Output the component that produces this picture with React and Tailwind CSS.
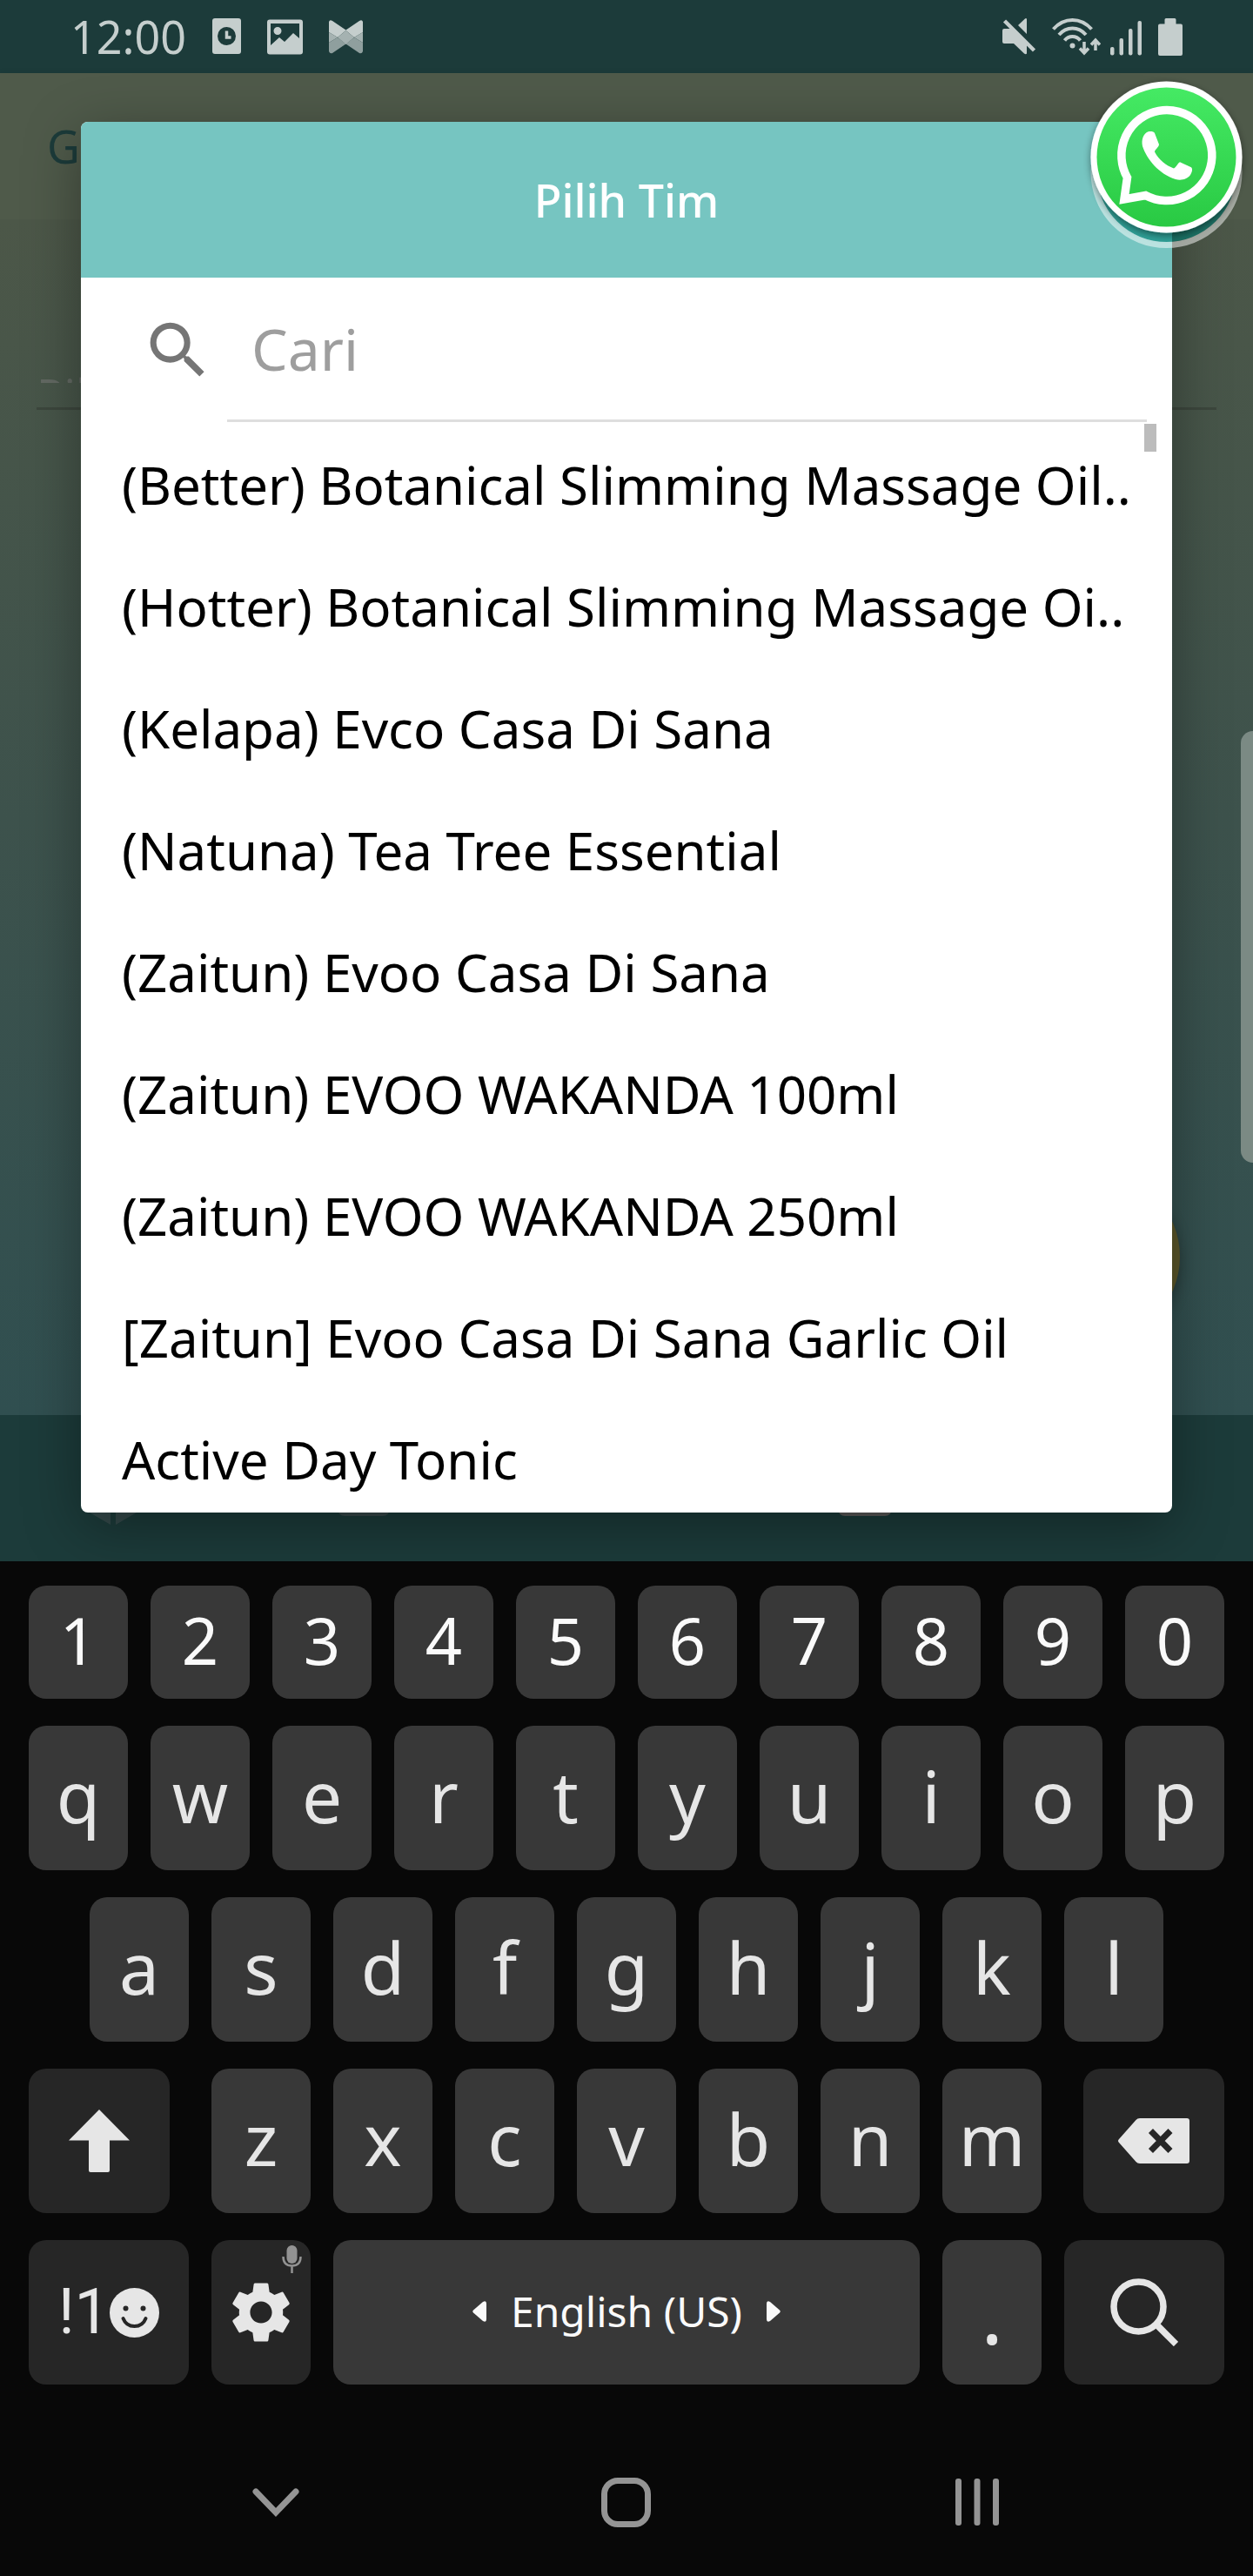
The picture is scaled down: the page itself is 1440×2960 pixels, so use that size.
const TEAMS = [
  "(Better) Botanical Slimming Massage Oil..",
  "(Hotter) Botanical Slimming Massage Oi..",
  "(Kelapa) Evco Casa Di Sana",
  "(Natuna) Tea Tree Essential",
  "(Zaitun) Evoo Casa Di Sana",
  "(Zaitun) EVOO WAKANDA 100ml",
  "(Zaitun) EVOO WAKANDA 250ml",
  "[Zaitun] Evoo Casa Di Sana Garlic Oil",
  "Active Day Tonic",
];

function StatusBar() {
  return (
    <header className="flex h-[84px] items-center justify-between bg-[#1c3b3a] px-[81px] text-[#c5cecd]">
      <div className="flex items-center gap-[30px]">
        <span className="text-[52px] leading-none">12:00</span>
        <svg width="33" height="42" viewBox="0 0 33 42" aria-hidden="true">
          <rect width="33" height="41" y="0" rx="3" fill="currentColor" />
          <circle cx="16.500" cy="20.500" r="10.500" fill="#1c3b3a" />
          <path d="M16.500 14.500v7.500h5" fill="none" stroke="currentColor" strokeWidth="3.500" />
        </svg>
        <svg width="41" height="41" viewBox="0 0 41 41" aria-hidden="true">
          <path
            fillRule="evenodd"
            fill="currentColor"
            d="M3 0.500h35a3 3 0 0 1 3 3v34a3 3 0 0 1-3 3H3a3 3 0 0 1-3-3v-34a3 3 0 0 1 3-3zM4 5v25l10-9 6 5 10-10 7 6V5zM12 9a4.500 4.500 0 1 1 0 9 4.500 4.500 0 0 1 0-9z"
          />
        </svg>
        <svg width="39" height="39" viewBox="0 0 39 39" aria-hidden="true">
          <path d="M0 2Q1-1 4 1L19.500 11.500 35 1Q38-1 39 2V14L29 20 19.500 12 10 20 0 14Z" fill="#c5cecd" />
          <path d="M0 14L10 20 19.500 12 29 20 39 14V26L29 20 19.500 28 10 20 0 26Z" fill="#a5b2b1" />
          <path d="M0 26L10 20 19.500 27.500 4 38Q1 39 0 36ZM39 26L29 20 19.500 27.500 35 38Q38 39 39 36Z" fill="#8f9f9e" />
        </svg>
      </div>
      <div className="flex items-center gap-[11px]">
        <svg className="mr-[7px]" width="39" height="44" viewBox="0 0 39 44" aria-hidden="true" fill="currentColor">
          <path d="M2 13H10L28 31V41.500Q27 43 25 41.500L13 30H2Q0 30 0 28V15Q0 13 2 13ZM18 9L26 1.500Q27.500 0.500 28 2V19Z" />
          <path d="M2.500 4L36.500 38" stroke="currentColor" strokeWidth="4.500" />
        </svg>
        <svg width="56" height="44" viewBox="0 0 56 44" aria-hidden="true" fill="none" stroke="currentColor" strokeWidth="4">
          <path d="M1.500 13.500Q11 3 23.500 3T45.500 13.500M8 20Q14.500 12.500 23.500 12.500T39 20M14.500 26.500Q18 22 23.500 22T32.500 26.500" />
          <circle cx="23.500" cy="32.500" r="3" fill="currentColor" stroke="none" />
          <path d="M37 28V41M32 35.500L37 41 42 35.500M50 38V26M45 31.500L50 26 55 31.500" strokeWidth="3.500" />
        </svg>
        <svg className="mr-2" width="36" height="44" viewBox="0 0 36 44" aria-hidden="true" fill="currentColor">
          <rect y="34" width="4.500" height="9.500" rx="2" />
          <rect x="10.500" y="24" width="4.500" height="19.500" rx="2" />
          <rect x="21" y="13" width="4.500" height="30.500" rx="2" />
          <rect x="31.500" y="4" width="4.500" height="39.500" rx="2" />
        </svg>
        <svg width="28" height="43" viewBox="0 0 28 43" aria-hidden="true" fill="currentColor">
          <path d="M9 0H19Q20.500 0 20.500 1.500V6.500H26Q28 6.500 28 8.500V41Q28 43 26 43H2Q0 43 0 41V8.500Q0 6.500 2 6.500H7.500V1.500Q7.500 0 9 0Z" />
        </svg>
      </div>
    </header>
  );
}

function PageBehind() {
  return (
    <div className="absolute inset-0 flex flex-col" aria-hidden="true">
      <div className="flex h-[168px] items-center bg-[#4f5a4a] px-[54px] text-[52px] leading-none text-[#1c3b3a] shadow-[0_2px_8px_rgba(0,0,0,0.15)]">
        G
      </div>
      <div className="relative flex-1 bg-linear-to-b from-[#4c5748] via-[#3d524c] to-[#304f50] px-[42px] pt-[166px]">
        <div className="h-[22px] overflow-hidden text-[52px] leading-[72px] text-[#636963]">Pilih Tim</div>
        <div className="mt-7 h-[3px] bg-[#3c473d]" />
        <div className="absolute right-[84px] bottom-[84px] size-[196px] rounded-full bg-[#5a5629] shadow-[0_6px_16px_rgba(0,0,0,0.3)]" />
      </div>
      <div className="grid h-[168px] grid-cols-5 items-center bg-[#1c3b3a]">
        <div className="flex justify-center pr-7">
          <svg width="54" height="84" viewBox="0 0 54 84">
            <path d="M0 28L24 41.500V84L0 70ZM54 28L30 41.500V84L54 70ZM27 8L50 22 27 35 4 22Z" fill="#34494a" />
          </svg>
        </div>
        <div className="flex justify-center pr-7">
          <div className="h-16 w-[60px] rounded-lg bg-[#374849]" />
        </div>
        <div />
        <div className="flex justify-center pr-7">
          <div className="h-16 w-[62px] rounded-lg bg-[#5a5958]" />
        </div>
        <div />
      </div>
    </div>
  );
}

function TeamDialog() {
  return (
    <section
      role="dialog"
      aria-labelledby="dialog-title"
      className="relative mx-[93px] my-14 overflow-hidden rounded-lg bg-white shadow-[0_16px_64px_rgba(0,0,0,0.35)]"
    >
      <div className="flex h-[179px] items-center justify-center bg-[#76c5c1]">
        <h1 id="dialog-title" className="text-[52px] leading-none font-medium text-white">
          Pilih Tim
        </h1>
      </div>
      <div className="flex h-[168px] items-stretch gap-3.5 pr-[29px] pb-0.5 pl-[69px]">
        <label htmlFor="team-search" className="flex items-center text-[#757575]">
          <svg width="85" height="85" viewBox="0 0 24 24" fill="currentColor" aria-label="Cari">
            <path d="M15.500 14h-.79l-.28-.27A6.471 6.471 0 0 0 16 9.500 6.500 6.500 0 1 0 9.500 16c1.610 0 3.090-.59 4.230-1.570l.27.28v.79l5 4.990L20.490 19l-4.990-5zm-6 0C7.010 14 5 11.990 5 9.500S7.010 5 9.500 5 14 7.010 14 9.500 11.990 14 9.500 14z" />
          </svg>
        </label>
        <input
          id="team-search"
          type="text"
          placeholder="Cari"
          className="min-w-0 flex-1 border-b-[3px] border-[#dedede] bg-transparent pl-7 text-[66px] text-black outline-none placeholder:text-[#9e9e9e]"
        />
      </div>
      <div className="relative h-[1251px] overflow-hidden">
        <ul>
          {TEAMS.map((team) => (
            <li key={team}>
              <button type="button" className="block w-full pl-[47px] text-left text-[60px] leading-[140px] whitespace-nowrap text-black">
                {team}
              </button>
            </li>
          ))}
        </ul>
        <div className="absolute top-0 right-[18px] h-8 w-3.5 bg-[#bcbcbc]" />
      </div>
    </section>
  );
}

function WhatsAppBubble() {
  return (
    <button type="button" aria-label="WhatsApp" className="absolute top-20 right-0">
      <svg width="200" height="220" viewBox="0 0 200 220" aria-hidden="true">
        <defs>
          <linearGradient id="wa-green" x1="0" y1="0" x2="0" y2="1">
            <stop offset="0" stopColor="#45ea64" />
            <stop offset="1" stopColor="#29c943" />
          </linearGradient>
          <filter id="wa-shadow" x="-10%" y="-10%" width="120%" height="120%">
            <feDropShadow dx="0" dy="3" stdDeviation="4" floodOpacity="0.45" />
          </filter>
        </defs>
        <circle cx="100.500" cy="118" r="80" fill="#008579" fillOpacity="0.600" />
        <circle cx="100.500" cy="118" r="83.500" fill="none" stroke="#fff" strokeWidth="7" strokeOpacity="0.500" />
        <circle cx="100.500" cy="100.500" r="87" fill="#fff" filter="url(#wa-shadow)" />
        <circle cx="100.500" cy="100.500" r="80" fill="url(#wa-green)" />
        <path d="M76.500 144.500A52 52 0 1 0 55.500 124L52 149Z" fill="none" stroke="#fff" strokeWidth="9.500" />
        <path
          fill="#fff"
          d="M79 71.500C82 70.500 86 71 87 73L92 86C92 89 87 92 87 94.500C92 104 100 110 109 113.500C111 113 114 107 116 106.300L129 112.300C131 114 130 118 128 121C124 126.500 117 127.500 111 126C92 120 78 103 73 88C71.500 80 74 74 79 71.500Z"
        />
      </svg>
    </button>
  );
}

function Key({ children }) {
  return (
    <button
      type="button"
      className="flex h-[166px] flex-1 items-center justify-center rounded-[20px] bg-[#383838] pb-1.5 text-[82px] leading-none text-[#e6e6e6]"
    >
      {children}
    </button>
  );
}

function Keyboard() {
  return (
    <div className="relative flex flex-col gap-[31px] bg-[#080808] px-[33px] pt-7 pb-[50px]">
      <div className="flex gap-[26px]">
        {"1234567890".split("").map((digit) => (
          <button
            key={digit}
            type="button"
            className="flex h-[130px] flex-1 items-center justify-center rounded-[20px] bg-[#383838] pb-1 text-[74px] leading-none text-[#fafafa]"
          >
            {digit}
          </button>
        ))}
      </div>
      <div className="flex gap-[26px]">
        {"qwertyuiop".split("").map((letter) => (
          <Key key={letter}>{letter}</Key>
        ))}
      </div>
      <div className="flex gap-[26px] px-[70px]">
        {"asdfghjkl".split("").map((letter) => (
          <Key key={letter}>{letter}</Key>
        ))}
      </div>
      <div className="flex gap-12">
        <button type="button" aria-label="Shift" className="flex h-[166px] flex-[162] items-center justify-center rounded-[20px] bg-[#262626] text-[#e6e6e6]">
          <svg width="70" height="72" viewBox="0 0 70 72" fill="currentColor" aria-hidden="true">
            <path d="M35 0L70 35.500H47V70Q47 72 45 72H25Q23 72 23 70V35.500H0Z" />
          </svg>
        </button>
        <div className="flex flex-[954] gap-[26px]">
          {"zxcvbnm".split("").map((letter) => (
            <Key key={letter}>{letter}</Key>
          ))}
        </div>
        <button type="button" aria-label="Backspace" className="flex h-[166px] flex-[162] items-center justify-center rounded-[20px] bg-[#262626] text-[#e6e6e6]">
          <svg width="82" height="52" viewBox="0 0 82 52" aria-hidden="true">
            <path d="M25 0H79Q82 0 82 3V49Q82 52 79 52H25Q22 52 20.500 50L1 28Q-1 26 1 24L20.500 2Q22 0 25 0Z" fill="currentColor" />
            <path d="M37.500 14.500L60 37.500M60 14.500L37.500 37.500" stroke="#262626" strokeWidth="7" />
          </svg>
        </button>
      </div>
      <div className="flex gap-[26px]">
        <button type="button" aria-label="Symbols and emoji" className="flex h-[166px] flex-[184] items-center justify-center rounded-[20px] bg-[#262626] text-[#e6e6e6]">
          <span className="font-['Roboto',sans-serif] text-[72px] leading-none">!1</span>
          <svg width="57" height="57" viewBox="0 0 57 57" aria-hidden="true">
            <circle cx="28.500" cy="28.500" r="28.500" fill="currentColor" />
            <circle cx="18.500" cy="23.500" r="3" fill="#262626" />
            <circle cx="38.500" cy="23.500" r="3" fill="#262626" />
            <path d="M15.500 35Q19 44 28.500 44T41.500 35" fill="none" stroke="#262626" strokeWidth="4" strokeLinecap="round" />
          </svg>
        </button>
        <button type="button" aria-label="Keyboard settings" className="relative flex h-[166px] flex-[114] items-center justify-center rounded-[20px] bg-[#262626] text-[#e6e6e6]">
          <svg width="84" height="84" viewBox="0 0 24 24" fill="currentColor" aria-hidden="true">
            <path d="M19.140 12.940c.04-.3.06-.61.06-.94 0-.32-.02-.64-.07-.94l2.030-1.580c.18-.14.23-.41.12-.61l-1.920-3.320c-.12-.22-.37-.29-.59-.22l-2.390.96c-.5-.38-1.030-.7-1.620-.94l-.36-2.540c-.04-.24-.24-.41-.48-.41h-3.840c-.24 0-.43.17-.47.41l-.36 2.540c-.59.24-1.130.57-1.620.94l-2.390-.96c-.22-.08-.47 0-.59.22L2.740 8.870c-.12.21-.08.47.12.61l2.030 1.580c-.05.3-.09.63-.09.94s.02.64.07.94l-2.030 1.580c-.18.14-.23.41-.12.61l1.920 3.320c.12.22.37.29.59.22l2.390-.96c.5.38 1.030.7 1.620.94l.36 2.540c.05.24.24.41.48.41h3.840c.24 0 .44-.17.47-.41l.36-2.540c.59-.24 1.130-.56 1.620-.94l2.390.96c.22.08.47 0 .59-.22l1.920-3.320c.12-.22.07-.47-.12-.61l-2.010-1.580zM12 15.600c-1.980 0-3.600-1.620-3.600-3.600s1.620-3.600 3.600-3.600 3.600 1.620 3.600 3.600-1.620 3.600-3.600 3.600z" />
          </svg>
          <svg className="absolute top-1.5 right-2.5" width="23" height="32" viewBox="0 0 23 32" fill="none" stroke="#929292" aria-hidden="true">
            <rect x="5.500" width="12" height="21" rx="6" fill="#929292" stroke="none" />
            <path d="M1.500 13Q1.500 23.500 11.500 23.500T21.500 13M11.500 23.500V32" strokeWidth="2.500" />
          </svg>
        </button>
        <button type="button" className="flex h-[166px] flex-[674] items-center justify-center gap-7 rounded-[20px] bg-[#383838] pb-0.5 text-[48px] leading-none text-[#fafafa]">
          <svg width="16" height="26" viewBox="0 0 16 24" fill="currentColor" aria-hidden="true">
            <path d="M1 10.500L12 1Q16-1 16 3V21Q16 25 12 23L1 13.500Q-0.500 12 1 10.500Z" />
          </svg>
          English (US)
          <svg width="16" height="26" viewBox="0 0 16 24" fill="currentColor" aria-hidden="true">
            <path d="M15 10.500L4 1Q0-1 0 3V21Q0 25 4 23L15 13.500Q16.500 12 15 10.500Z" />
          </svg>
        </button>
        <button type="button" className="flex h-[166px] flex-[114] items-center justify-center rounded-[20px] bg-[#383838] text-[96px] leading-none text-[#e6e6e6]">
          .
        </button>
        <button type="button" aria-label="Search" className="flex h-[166px] flex-[184] items-center justify-center rounded-[20px] bg-[#262626] text-[#e6e6e6]">
          <svg width="78" height="78" viewBox="0 0 78 78" fill="none" stroke="currentColor" strokeWidth="7.500" aria-hidden="true">
            <circle cx="32.500" cy="32.500" r="28.500" />
            <path d="M53 53L75.500 75.500" />
          </svg>
        </button>
      </div>
    </div>
  );
}

function SystemNav() {
  return (
    <nav className="relative flex h-[170px] items-center justify-around bg-[#080808] px-[115px] text-[#949494]">
      <button type="button" aria-label="Hide keyboard" className="flex w-16 justify-center">
        <svg width="54" height="36" viewBox="0 0 54 36" fill="none" stroke="currentColor" strokeWidth="7" strokeLinecap="round" aria-hidden="true">
          <path d="M4 6L27 30 50 6" strokeLinejoin="miter" />
        </svg>
      </button>
      <button type="button" aria-label="Home" className="flex w-16 justify-center">
        <span className="size-[57px] rounded-[19px] border-[7px] border-[#949494]" />
      </button>
      <button type="button" aria-label="Recent apps" className="flex w-16 justify-center">
        <svg width="50" height="54" viewBox="0 0 50 54" fill="currentColor" aria-hidden="true">
          <rect width="7" height="54" rx="3" />
          <rect x="21.500" width="7" height="54" rx="3" />
          <rect x="43" width="7" height="54" rx="3" />
        </svg>
      </button>
    </nav>
  );
}

export default function App() {
  return (
    <div className="relative flex min-h-screen flex-col bg-[#080808] font-['Noto_Sans',sans-serif]">
      <StatusBar />
      <main className="relative flow-root">
        <PageBehind />
        <TeamDialog />
      </main>
      <Keyboard />
      <SystemNav />
      <div className="absolute top-[840px] right-0 h-[496px] w-3.5 rounded-l-2xl bg-[#7b8a84]" />
      <WhatsAppBubble />
    </div>
  );
}
